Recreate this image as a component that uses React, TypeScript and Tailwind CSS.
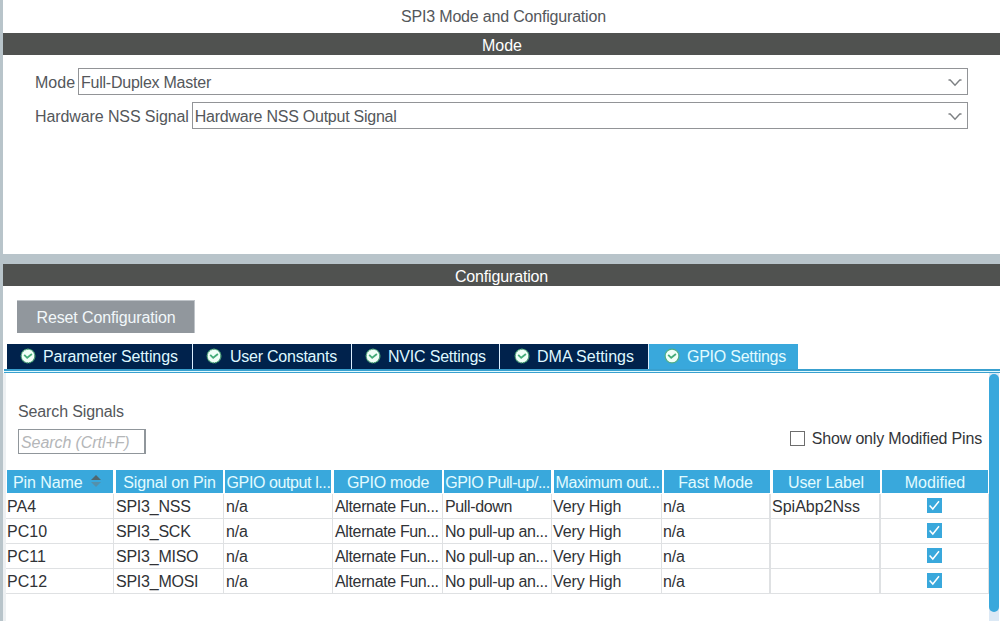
import clsx from "clsx";

const tabs = [
  { label: "Parameter Settings", width: "w-[186px] pl-[13px]", text: "ml-[7px] tracking-[-0.12px]" },
  { label: "User Constants", width: "w-[159px] pl-[13px]", text: "ml-[8px] tracking-[-0.24px]" },
  { label: "NVIC Settings", width: "w-[148px] pl-[13px]", text: "ml-[7px] tracking-[-0.2px]" },
  { label: "DMA Settings", width: "w-[149px] pl-[14px]", text: "ml-[7px]" },
  { label: "GPIO Settings", width: "w-[149px] pl-[15px]", text: "ml-[7px] tracking-[-0.25px]", active: true },
];

const columns = [
  { name: "Pin Name", text: "tracking-[-0.1px]" },
  { name: "Signal on Pin", text: "pl-px tracking-[-0.15px]" },
  { name: "GPIO output l...", text: "pl-px tracking-[-0.4px]" },
  { name: "GPIO mode", text: "pl-px tracking-[-0.25px]" },
  { name: "GPIO Pull-up/...", text: "tracking-[-0.46px]" },
  { name: "Maximum out...", text: "tracking-[-0.38px]" },
  { name: "Fast Mode", text: "pr-[3px] tracking-[-0.1px]" },
  { name: "User Label", text: "tracking-[-0.15px]" },
  { name: "Modified", text: "tracking-normal" },
];

const pins = [
  ["PA4", "SPI3_NSS", "n/a", "Alternate Fun...", "Pull-down", "Very High", "n/a", "SpiAbp2Nss"],
  ["PC10", "SPI3_SCK", "n/a", "Alternate Fun...", "No pull-up an...", "Very High", "n/a", ""],
  ["PC11", "SPI3_MISO", "n/a", "Alternate Fun...", "No pull-up an...", "Very High", "n/a", ""],
  ["PC12", "SPI3_MOSI", "n/a", "Alternate Fun...", "No pull-up an...", "Very High", "n/a", ""],
];

const cellText = [
  "pl-px tracking-normal",
  "pl-[2px] tracking-[-0.24px]",
  "pl-[2px] tracking-[-0.2px]",
  "pl-[2px] tracking-[-0.36px]",
  "pl-[2px] tracking-[-0.36px]",
  "pl-px tracking-[-0.12px]",
  "pl-px tracking-[-0.2px]",
  "pl-px tracking-normal",
];

const headGrid = "grid grid-cols-[106px_107px_106px_108px_107px_108px_106px_107px_106px]";
const bodyGrid = "grid grid-cols-[108px_110px_109px_110px_109px_110px_109px_110px_108px]";

const Select = ({ label, value, labelText }: { label: string; value: string; labelText?: string }) => (
  <div className="flex h-[27px] items-center">
    <span className={clsx("mr-[3px] pt-[2px] whitespace-nowrap", labelText)}>{label}</span>
    <div className="flex h-full flex-1 items-center justify-between border border-[#929497] pt-[2px] pr-[5px] pl-[2px]">
      <span className="tracking-[-0.24px]">{value}</span>
      <svg className="h-2 w-[14px]" viewBox="0 0 14 8" fill="none" stroke="#7d8083" strokeWidth="1.4">
        <path d="M0.5 1 H2.2 L7 6.2 L11.8 1 H13.5" />
      </svg>
    </div>
  </div>
);

const StatusIcon = ({ active }: { active?: boolean }) => (
  <svg className="mb-[2px] h-4 w-4 shrink-0" viewBox="0 0 16 16" fill="none">
    <circle cx="8" cy="8" r="6.9" fill="#f0fff7" stroke={active ? "#4fae86" : "#3f9a6e"} strokeWidth="1.2" strokeDasharray={active ? undefined : "2 0.6"} />
    <path d="M4.2 6.8 L7.2 9.8 L11.9 6" stroke="#45ad79" strokeWidth="1.8" />
  </svg>
);

const CheckedBox = () => (
  <svg className="h-[15px] w-[15px]" viewBox="0 0 15 15" fill="none">
    <rect width="15" height="15" fill="#39a8dc" />
    <path d="M2.6 7.5 L5.8 11 L12 3.2" stroke="white" strokeWidth="1.5" />
  </svg>
);

const SortIcon = () => (
  <svg className="h-3 w-[10px] shrink-0" viewBox="0 0 10 12">
    <path d="M5 0 L10 5 H0 Z" fill="#50676f" />
    <path d="M0 7 H10 L5 12 Z" fill="#5590ab" />
  </svg>
);

const App = () => {
  return (
    <div className="flex h-[621px] w-[1000px] overflow-hidden bg-[#b8c4ca] pl-[3px] font-['Liberation_Sans',Arial,sans-serif] text-[16px] leading-[22px] text-[#54575b]">
      <div className="flex min-w-0 flex-1 flex-col">
        <section className="h-[254px] bg-white">
          <h1 className="h-[33px] pt-[6px] pl-[4px] text-center tracking-[-0.19px]">SPI3 Mode and Configuration</h1>
          <h2 className="h-[22px] bg-[#505250] pt-[2px] pl-px text-center text-white">Mode</h2>
          <div className="flex flex-col gap-[7px] pt-[13px] pr-8 pl-8">
            <Select label="Mode" value="Full-Duplex Master" />
            <Select label="Hardware NSS Signal" value="Hardware NSS Output Signal" labelText="tracking-[-0.1px]" />
          </div>
        </section>

        <section className="mt-[10px] flex flex-1 flex-col bg-white">
          <h2 className="h-[22px] shrink-0 bg-[#505250] pt-[2px] text-center tracking-[-0.16px] text-white">Configuration</h2>
          <button className="mt-[14px] ml-[14px] h-[33px] w-[178px] shrink-0 border-t border-r border-[#bfc4c9] bg-[#91979d] pt-px pl-px tracking-[-0.13px] text-[#f1f7fa]">Reset Configuration</button>

          <div className="mt-[11px] ml-[4px] flex h-[25px] shrink-0">
            {tabs.map((tab) => (
              <div key={tab.label} className={clsx("flex items-center whitespace-nowrap", tab.width, tab.active ? "bg-[#39a8dc] text-[#e2fbff]" : "border-r border-[#dcefff] bg-[#00224c] text-[#dff7ff]")}>
                <StatusIcon active={tab.active} />
                <span className={tab.text}>{tab.label}</span>
              </div>
            ))}
          </div>
          <div className="ml-px h-[4px] shrink-0 border-t-2 border-b border-[#39a0cf] bg-[#e3fbff]" />

          <div className="flex min-h-0 flex-1">
            <div className="w-[986px] shrink-0 border-l-[3px] border-[#edf0f2]">
              <div className="flex h-[97px] justify-between">
                <div className="pt-[28px] pl-[12px]">
                  <div className="tracking-[-0.13px]">Search Signals</div>
                  <div className="mt-[6px] h-[25px] w-[128px] border border-r-2 border-[#90969b] pt-[2px] pl-[2px] leading-[21px] tracking-[-0.08px] text-[#b4b6b8] italic">Search (Crtl+F)</div>
                </div>
                <label className="mt-[54px] flex h-[22px] items-center self-start pr-[7px] tracking-[-0.18px] text-[#333539]">
                  <span className="mr-[7px] h-[15px] w-[15px] border border-[#6d6d6d]" />
                  <span className="pt-px">Show only Modified Pins</span>
                </label>
              </div>

              <div className={clsx(headGrid, "ml-px h-[23px] justify-between pr-px leading-[21px] text-[#e2fbff]")}>
                {columns.map((col, i) => (
                  <div key={col.name} className={clsx("flex items-center bg-[#39a8dc] pt-[2px] whitespace-nowrap", col.text, i === 0 ? "pl-[6px]" : "justify-center")}>
                    {col.name}
                    {i === 0 && (
                      <span className="mb-[4px] ml-[9px] flex">
                        <SortIcon />
                      </span>
                    )}
                  </div>
                ))}
              </div>

              <div className="pt-px text-[#303236]">
                {pins.map((pin) => (
                  <div key={pin[0]} className={clsx(bodyGrid, "h-[25px] border-b border-[#dfe1e3]")}>
                    {pin.map((value, i) => (
                      <div key={i} className={clsx("border-r border-[#dfe1e3] pt-[2px] whitespace-nowrap", cellText[i], i > 5 && "border-r-2")}>
                        {value}
                      </div>
                    ))}
                    <div className="flex items-start justify-center border-r border-[#dfe1e3] pt-[4px]">
                      <CheckedBox />
                    </div>
                  </div>
                ))}
              </div>
            </div>
            <div className="w-[10px] shrink-0 bg-[#dce9f5]">
              <div className="mt-px h-[238px] rounded-full bg-[#39a8dc]" />
            </div>
          </div>
        </section>
      </div>
    </div>
  );
};

export default App;
